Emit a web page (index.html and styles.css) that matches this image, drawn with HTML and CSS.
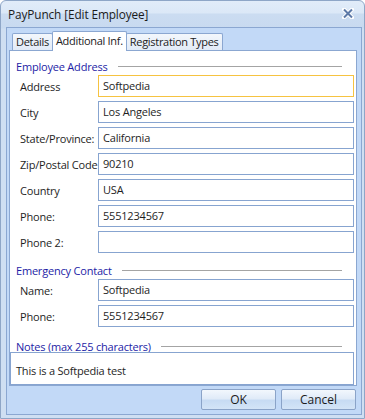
FILE: index.html
```html
<!DOCTYPE html>
<html lang="en">

<head>
    <meta charset="UTF-8">
    <title>PayPunch [Edit Employee]</title>
    <link rel="stylesheet" href="styles.css">
</head>

<body>
    <div class="window">
        <!-- title bar -->
        <div class="titlebar">
            <span class="title">PayPunch [Edit Employee]</span>
            <svg class="close" width="12" height="11" viewBox="0 0 12 11">
                <path d="M2 1.5 L10 9.5 M10 1.5 L2 9.5" stroke="#ffffff" stroke-width="4" stroke-linecap="square" />
                <path d="M2 1.5 L10 9.5 M10 1.5 L2 9.5" stroke="#5d7aa8" stroke-width="2" />
            </svg>
        </div>

        <div class="client">
            <!-- tabs -->
            <div class="tabs">
                <div class="tab">Details</div>
                <div class="tab active">Additional Inf.</div>
                <div class="tab">Registration Types</div>
            </div>

            <div class="panel">
                <div class="section">
                    <span>Employee Address</span>
                    <div class="rule"></div>
                </div>
                <div class="row"><label>Address</label><div class="field focus">Softpedia</div></div>
                <div class="row"><label>City</label><div class="field">Los Angeles</div></div>
                <div class="row"><label>State/Province:</label><div class="field">California</div></div>
                <div class="row"><label>Zip/Postal Code</label><div class="field">90210</div></div>
                <div class="row"><label>Country</label><div class="field">USA</div></div>
                <div class="row"><label>Phone:</label><div class="field">5551234567</div></div>
                <div class="row"><label>Phone 2:</label><div class="field"></div></div>

                <div class="section second">
                    <span>Emergency Contact</span>
                    <div class="rule"></div>
                </div>
                <div class="row"><label>Name:</label><div class="field">Softpedia</div></div>
                <div class="row"><label>Phone:</label><div class="field">5551234567</div></div>

                <div class="section notes-head">
                    <span>Notes (max 255 characters)</span>
                    <div class="rule"></div>
                </div>
                <div class="notes">This is a Softpedia test</div>
            </div>

            <!-- buttons -->
            <div class="footer">
                <button class="btn">OK</button>
                <button class="btn">Cancel</button>
            </div>
        </div>
    </div>
</body>

</html>
```

FILE: styles.css
```css
/* page */
body {
    margin: 0;
    font-family: "Open Sans", "Noto Sans", sans-serif;
    font-size: 11px;
    letter-spacing: -0.2px;
    color: #1e1e1e;
    background: #ffffff;
}

/* window frame */
.window {
    height: 417px;
    border: 1px solid #8ea6c7;
    border-radius: 6px 6px 0 0;
    background: linear-gradient(to bottom, #e1ecf9 0px, #dbe8f7 12px, #cbdcf1 13px, #c8daf0 27px, #cfdff2 28px);
    display: flex;
    flex-direction: column;
}

.titlebar {
    flex-shrink: 0;
    height: 26px;
    display: flex;
    align-items: center;
    justify-content: space-between;
    padding: 0 10px 0 7px;
}

.title {
    font-size: 11.8px;
    letter-spacing: -0.1px;
    color: #1b1b1b;
}

.close {
    margin-top: -2px;
}

/* inner area with the tabs */
.client {
    flex: 1;
    min-height: 0;
    margin: 0 2px 3px 5px;
    border: 1px solid #8ba7d1;
    background: #c2d9f7;
    padding: 3px 4px 0 2px;
    display: flex;
    flex-direction: column;
}

.tabs {
    flex-shrink: 0;
    display: flex;
    align-items: flex-end;
    padding-left: 3px;
    height: 19px;
}

.tab {
    height: 16px;
    line-height: 16px;
    padding: 0 3px;
    border: 1px solid #8ba7d1;
    border-bottom: none;
    border-radius: 2px 2px 0 0;
    background: linear-gradient(to bottom, #f3f7fc, #e2ebf7);
    color: #222;
    letter-spacing: -0.3px;
    margin-right: -1px;
}

.tab.active {
    height: 19px;
    line-height: 17px;
    background: #ffffff;
    position: relative;
    z-index: 1;
    margin-bottom: -1px;
}

.panel {
    flex: 1;
    min-height: 0;
    background: #ffffff;
    border: 1px solid #8ba7d1;
    padding: 7px 1px 0 0;
    display: flex;
    flex-direction: column;
}

/* group headings */
.section {
    flex-shrink: 0;
    display: flex;
    align-items: center;
    height: 16px;
    padding-left: 6px;
    margin-bottom: -3px;
    color: #1d1da6;
}

.section .rule {
    flex: 1;
    height: 1px;
    background: #a4a4a4;
    margin: 1px 13px 0 10px;
}

.section.second {
    margin-top: 9px;
}

.notes-head {
    margin-top: 11px;
    margin-bottom: -2px;
}

/* form rows */
.row {
    flex-shrink: 0;
    display: flex;
    align-items: center;
    padding-left: 10px;
    margin-top: 4px;
}

.row label {
    width: 78px;
    white-space: nowrap;
}

.field {
    flex: 1;
    height: 20px;
    line-height: 20px;
    border: 1px solid #87a4d0;
    padding-left: 4px;
    margin-right: 1px;
}

.field.focus {
    border-color: #f6c341;
}

.notes {
    flex: 1;
    min-height: 0;
    border: 1px solid #87a4d0;
    margin-right: 1px;
    padding: 10px 5px 0;
    line-height: 16px;
}

/* dialog buttons */
.footer {
    flex-shrink: 0;
    display: flex;
    justify-content: flex-end;
    gap: 5px;
    padding: 3px 1px 4px 0;
}

.btn {
    width: 75px;
    height: 21px;
    border: 1px solid #8aa3c8;
    border-radius: 2px;
    background: linear-gradient(to bottom, #f2f7fd 0%, #e0ebf8 45%, #c7dbf3 55%, #d3e4f7 100%);
    font-family: "Open Sans", "Noto Sans", sans-serif;
    font-size: 12px;
    color: #1b1b1b;
    padding: 0;
}
```
